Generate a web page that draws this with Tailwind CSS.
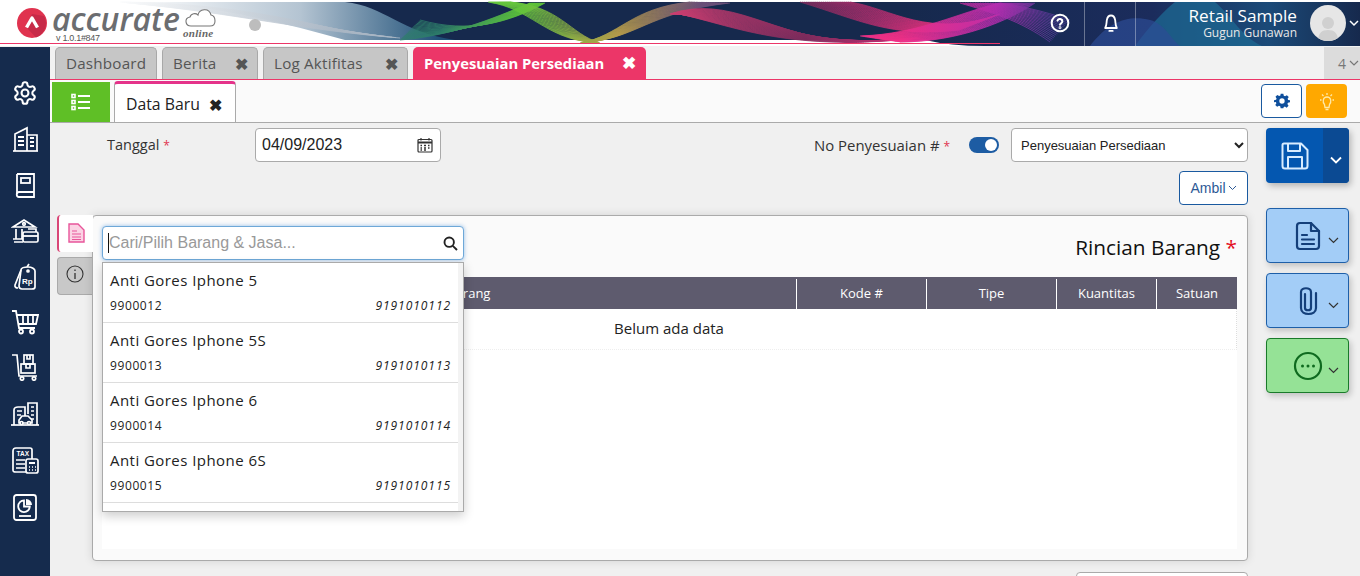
<!DOCTYPE html>
<html lang="id">
<head>
<meta charset="UTF-8">
<title>Accurate Online</title>
<script src="https://cdn.jsdelivr.net/npm/@tailwindcss/browser@4"></script>
</head>
<body class="h-[576px] w-[1360px] overflow-hidden bg-[#f0f0f0] font-['Open_Sans',sans-serif] text-[#222]">

<!-- header -->
<header class="relative flex h-[46px] items-center bg-white">
  <svg id="waves" class="absolute inset-0" width="1360" height="46" viewBox="0 0 1360 46">
    <defs>
      <linearGradient id="leftFade" gradientUnits="userSpaceOnUse" x1="130" y1="0" x2="440" y2="0">
        <stop offset="0" stop-color="#ffffff"/><stop offset="0.55" stop-color="#b4c4d2"/><stop offset="1" stop-color="#1f5078"/>
      </linearGradient>
      <linearGradient id="navy" gradientUnits="userSpaceOnUse" x1="900" y1="0" x2="1360" y2="0">
        <stop offset="0" stop-color="#16294d"/><stop offset="0.55" stop-color="#1b2c5c"/><stop offset="0.8" stop-color="#1b4a78"/><stop offset="1" stop-color="#16294d"/>
      </linearGradient>
      <linearGradient id="gGrey" gradientUnits="userSpaceOnUse" x1="110" y1="0" x2="340" y2="0">
        <stop offset="0" stop-color="#ffffff"/><stop offset="1" stop-color="#a9b6c4"/>
      </linearGradient>
      <linearGradient id="gGreen" gradientUnits="userSpaceOnUse" x1="440" y1="0" x2="590" y2="0">
        <stop offset="0" stop-color="#2d7d6a"/><stop offset="0.6" stop-color="#62cc34"/><stop offset="1" stop-color="#5cb840"/>
      </linearGradient>
      <linearGradient id="gOlive" gradientUnits="userSpaceOnUse" x1="520" y1="0" x2="700" y2="0">
        <stop offset="0" stop-color="#65c63c"/><stop offset="0.55" stop-color="#b49a4a"/><stop offset="1" stop-color="#6a4f78"/>
      </linearGradient>
      <linearGradient id="gPink" gradientUnits="userSpaceOnUse" x1="660" y1="0" x2="950" y2="0">
        <stop offset="0" stop-color="#d23f72"/><stop offset="0.5" stop-color="#7d2b5c"/><stop offset="1" stop-color="#e6307f"/>
      </linearGradient>
      <linearGradient id="gMagenta" gradientUnits="userSpaceOnUse" x1="900" y1="0" x2="1060" y2="0">
        <stop offset="0" stop-color="#ee2f86"/><stop offset="0.6" stop-color="#b52db0"/><stop offset="1" stop-color="#4a3d94"/>
      </linearGradient>
    </defs>
    <path d="M130 2 C210 4 280 22 345 40 H470 V2 Z" fill="url(#leftFade)"/>
    <path d="M345 2 C385 6 400 32 455 40 H925 Q950 46 985 46 H1360 V2 Z" fill="url(#navy)"/>
    <path d="M1135 46 C1150 25 1165 10 1175 2 H1215 C1235 20 1240 35 1262 46 Z" fill="#1e6a93" opacity="0.75"/>
    <path d="M1090 46 C1110 20 1130 15 1150 20 C1165 24 1170 38 1180 46 Z" fill="#2c4c94" opacity="0.7"/>
    <g id="lines" fill="none" stroke-width="0.8"></g>
    <rect x="0" y="43" width="1000" height="1" fill="#ec3668"/>
    <rect x="1084" y="2" width="1" height="44" fill="#ffffff" opacity="0.35"/>
    <rect x="1135" y="2" width="1" height="44" fill="#ffffff" opacity="0.35"/>
  </svg>

  <div class="relative flex h-full items-center pl-[17px]">
    <svg width="30" height="30" viewBox="0 0 30 30">
      <circle cx="15" cy="15" r="15" fill="#e0334f"/>
      <path d="M15 6 L27 8 A15 15 0 0 1 19 29.500 L9 19 Z" fill="#c72a48"/>
      <path d="M9.500 19.500 L15 10 L20.500 19.500" fill="none" stroke="#fff" stroke-width="3.400" stroke-linejoin="round"/>
    </svg>
    <div class="relative ml-[5px] h-full w-[124px]">
      <span class="absolute left-0 top-[-6px] text-[32px] leading-[50px] font-semibold italic text-[#6b6d70]">accurate</span>
      <span class="absolute left-[4px] top-[32px] font-['Liberation_Sans',sans-serif] text-[9px] leading-[12px] tracking-[-0.3px] text-[#555]">v 1.0.1#847</span>
    </div>
    <div class="relative ml-[7px] h-full w-[34px]">
      <svg class="absolute left-0 top-[6px]" width="34" height="22" viewBox="0 0 34 22" fill="#fff" stroke="#777" stroke-width="1.100">
        <path d="M8 20 C2 20 1 12 7 11 C8 7 13 7 15 9 C16 3 26 1 28 9 C33 10 34 20 27 20 Z"/>
      </svg>
      <span class="absolute left-0 top-[27px] font-['Liberation_Serif',serif] text-[11px] leading-[13px] font-bold italic tracking-[0.3px] text-[#666]">online</span>
    </div>
    <span class="ml-[32px] mt-[4px] size-[12px] rounded-full bg-[#bdbdbd]"></span>
  </div>

  <div class="relative ml-auto flex h-full items-center text-white">
    <svg class="mr-[10px]" width="20" height="20" viewBox="0 0 24 24" fill="none" stroke="#fff" stroke-width="2.400" stroke-linecap="round">
      <circle cx="12" cy="12" r="10"/><path d="M9 9.200a3 3 0 0 1 5.800 1c0 2-2.800 2.400-2.800 4"/><circle cx="12" cy="17.600" r="0.500" fill="#fff"/>
    </svg>
    <svg class="ml-[21px] mr-[15px]" width="20" height="20" viewBox="0 0 24 24" fill="none" stroke="#fff" stroke-width="2.200" stroke-linejoin="round">
      <path d="M5 18 C7 15 6.500 11 7 8.500 C7.600 5 9.800 3 12 3 C14.200 3 16.400 5 17 8.500 C17.500 11 17 15 19 18 Z"/><path d="M10 21.500h4" stroke-linecap="round"/>
    </svg>
    <div class="ml-[53px] flex flex-col items-end text-right">
      <span class="text-[17.200px] leading-[20px]">Retail Sample</span>
      <span class="text-[12px] leading-[14px] text-[#e8e8e8]">Gugun Gunawan</span>
    </div>
    <div class="ml-[13px] flex size-[36px] items-end justify-center overflow-hidden rounded-full bg-[#e6e6e6]">
      <svg width="24" height="28" viewBox="0 0 24 28" fill="#d0d0d0"><circle cx="12" cy="10" r="6"/><path d="M2 28 C2 20 6 17 12 17 C18 17 22 20 22 28 Z"/></svg>
    </div>
    <svg class="ml-[3px] mr-[1px]" width="10" height="8" viewBox="0 0 10 8" fill="none" stroke="#fff" stroke-width="1.500"><path d="M1 2 L5 6 L9 2"/></svg>
  </div>
</header>

<div class="flex h-[530px]">
  <!-- sidebar -->
  <aside class="mt-px flex h-[529px] w-[50px] shrink-0 flex-col items-center bg-[#152b4d] pt-[23px] text-white">
    <div class="flex h-[46px] items-center justify-center">
      <svg width="26" height="26" viewBox="0 0 24 24" fill="none" stroke="currentColor" stroke-width="1.900" stroke-linejoin="round"><path d="M12.200 2h-.4a2 2 0 0 0-2 2v.2a2 2 0 0 1-1 1.700l-.4.3a2 2 0 0 1-2 0l-.2-.1a2 2 0 0 0-2.700.7l-.2.4a2 2 0 0 0 .7 2.700l.2.1a2 2 0 0 1 1 1.700v.5a2 2 0 0 1-1 1.800l-.2.1a2 2 0 0 0-.7 2.700l.2.4a2 2 0 0 0 2.700.7l.2-.1a2 2 0 0 1 2 0l.4.3a2 2 0 0 1 1 1.700v.2a2 2 0 0 0 2 2h.4a2 2 0 0 0 2-2v-.2a2 2 0 0 1 1-1.700l.4-.3a2 2 0 0 1 2 0l.2.1a2 2 0 0 0 2.700-.7l.2-.4a2 2 0 0 0-.7-2.700l-.2-.1a2 2 0 0 1-1-1.800v-.5a2 2 0 0 1 1-1.700l.2-.1a2 2 0 0 0 .7-2.700l-.2-.4a2 2 0 0 0-2.700-.7l-.2.1a2 2 0 0 1-2 0l-.4-.3a2 2 0 0 1-1-1.700V4a2 2 0 0 0-2-2z"/><circle cx="12" cy="12" r="3.200"/></svg>
    </div>
    <div class="flex h-[46px] items-center justify-center">
      <svg width="27" height="27" viewBox="0 0 27 27" fill="none" stroke="currentColor" stroke-width="1.700"><path d="M1 25H26"/><path d="M3 25V8L15 2V25"/><path d="M15 9H25V25"/><path d="M6 11H12M6 15H12M6 19H12M18 12H22M18 16H22M18 20H22" stroke-width="1.800"/></svg>
    </div>
    <div class="flex h-[46px] items-center justify-center">
      <svg width="26" height="27" viewBox="0 0 26 27" fill="none" stroke="currentColor" stroke-width="1.800"><path d="M5 2H22V25H7C4 25 4 20 7 20H22"/><path d="M5 2V22"/><rect x="9" y="6" width="9" height="5"/></svg>
    </div>
    <div class="flex h-[46px] items-center justify-center">
      <svg width="28" height="27" viewBox="0 0 28 27" fill="none" stroke="currentColor" stroke-width="1.700"><path d="M2 9L13 2L24 9H2Z"/><circle cx="13" cy="6" r="1.300"/><path d="M5 11V21M11 11V21M3 24H12M2 21H12"/><rect x="12" y="14" width="15" height="10" rx="1.500" fill="#152b4d"/><path d="M12 18H27" stroke-width="1.800"/><path d="M17 11H25V14"/></svg>
    </div>
    <div class="flex h-[45px] items-center justify-center">
      <svg width="24" height="28" viewBox="0 0 24 28" fill="none" stroke="currentColor" stroke-width="1.700" stroke-linejoin="round"><path d="M8 7L2 22C1.500 24 3 25 5 25"/><path d="M8 7C8 5 11 4 15 4C19 4 22 6 22 8V24C22 26 20 26 19 26H9C7 26 6 25 6 23L8 7Z"/><path d="M14 4L16 1"/><circle cx="15" cy="8" r="1"/><text x="9" y="21" font-family="Liberation Sans" font-size="8" font-weight="700" fill="currentColor" stroke="none">Rp</text></svg>
    </div>
    <div class="flex h-[45px] items-center justify-center">
      <svg width="28" height="26" viewBox="0 0 28 26" fill="none" stroke="currentColor" stroke-width="1.800"><path d="M1 2H5L8 19H24"/><path d="M6 6H27L25 15H7.500"/><path d="M12 6V15M17 6V15M22 6V15"/><circle cx="10" cy="22.500" r="2"/><circle cx="21" cy="22.500" r="2"/></svg>
    </div>
    <div class="flex h-[46px] items-center justify-center">
      <svg width="28" height="28" viewBox="0 0 28 28" fill="none" stroke="currentColor" stroke-width="1.700"><path d="M1 2H6L8 23H26"/><rect x="10" y="11" width="14" height="9"/><rect x="13" y="2" width="9" height="9"/><path d="M16 2V6H19V2M15 11V15H19V11"/><circle cx="11" cy="25.500" r="1.700"/><circle cx="23" cy="25.500" r="1.700"/></svg>
    </div>
    <div class="flex h-[47px] items-center justify-center">
      <svg width="28" height="26" viewBox="0 0 28 26" fill="none" stroke="currentColor" stroke-width="1.700"><path d="M0 24H28"/><path d="M3 24V9C3 7 5 6 7 6H14V15"/><path d="M17 13V2H26V24"/><path d="M6 10H11M6 14H10M20 6H23M20 10H23M20 14H23M20 18H23"/><path d="M8 22V19L11 15H17L21 19V22Z" fill="#152b4d"/><circle cx="10.500" cy="22" r="1.500" fill="#152b4d"/><circle cx="18" cy="22" r="1.500" fill="#152b4d"/></svg>
    </div>
    <div class="flex h-[46px] items-center justify-center">
      <svg width="27" height="27" viewBox="0 0 27 27" fill="none" stroke="currentColor" stroke-width="1.700"><path d="M20 12V3C20 2 19 1 18 1H4C2 1 1 2 1 4V23C1 25 2 25 4 25H14"/><text x="4.500" y="9" font-family="Liberation Sans" font-size="6.500" font-weight="700" fill="currentColor" stroke="none">TAX</text><path d="M4 13H13M4 17H13M4 21H13"/><rect x="14" y="12" width="12" height="14" rx="2" fill="#152b4d"/><path d="M17 16H23" stroke-width="2"/><path d="M17 20H18M20 20H21M23 20H24M17 23H18M20 23H21M23 23H24" stroke-width="1.700"/></svg>
    </div>
    <div class="flex h-[47px] items-center justify-center pt-[1px]">
      <svg width="24" height="27" viewBox="0 0 24 27" fill="none" stroke="currentColor" stroke-width="1.800"><rect x="1" y="1" width="22" height="25" rx="2.500"/><path d="M11 6.500A5.800 5.800 0 1 0 16.800 12.500H11Z"/><path d="M13 5A6 6 0 0 1 19 11H13Z" fill="currentColor" stroke="none"/><path d="M6 22H18"/></svg>
    </div>
  </aside>

  <main class="min-w-0 flex-1">
    <!-- open tabs -->
    <div class="flex h-[34px] items-end border-b border-[#ec3668] bg-[#f2f2f2] pl-[5px]">
      <div class="mr-[5px] flex h-[32px] w-[102px] items-center rounded-t-[5px] border border-b-0 border-[#a8a8a8] bg-[#c6c6c6] pl-[10px] text-[15.200px] tracking-[0.2px] text-[#555]">Dashboard</div>
      <div class="mr-[5px] flex h-[32px] w-[96px] items-center rounded-t-[5px] border border-b-0 border-[#a8a8a8] bg-[#c6c6c6] pl-[10px] text-[15.200px] tracking-[0.2px] text-[#555]">Berita<span class="ml-auto mr-[9px] text-[16px] font-bold">✖</span></div>
      <div class="mr-[5px] flex h-[32px] w-[145px] items-center rounded-t-[5px] border border-b-0 border-[#a8a8a8] bg-[#c6c6c6] pl-[10px] text-[15.200px] tracking-[0.2px] text-[#555]">Log Aktifitas<span class="ml-auto mr-[9px] text-[16px] font-bold">✖</span></div>
      <div class="flex h-[32px] w-[233px] items-center rounded-t-[5px] bg-[#ec3668] pl-[11px] text-[14.800px] font-bold text-white">Penyesuaian Persediaan<span class="ml-auto mr-[10px] text-[17px]">✖</span></div>
      <div class="ml-auto flex h-[32px] w-[36px] items-center justify-end gap-[3px] bg-[#dcdcdc] pr-[1px] text-[14px] text-[#777]">4<svg width="10" height="7" viewBox="0 0 10 7" fill="none" stroke="#777" stroke-width="1.200"><path d="M1 1L5 5L9 1"/></svg></div>
    </div>

    <!-- form tabs -->
    <div class="flex h-[43px] items-end border-b border-[#aaa] bg-[#fafafa] pl-[2px]">
      <div class="flex h-[40px] w-[58px] items-center justify-center bg-[#5fbf26]">
        <svg width="20" height="18" viewBox="0 0 20 18" fill="none" stroke="#fff" stroke-width="1.600"><rect x="1" y="1.500" width="3" height="3"/><rect x="1" y="7.500" width="3" height="3"/><rect x="1" y="13.500" width="3" height="3"/><path d="M7 3H19M7 9H19M7 15H19" stroke-width="2"/></svg>
      </div>
      <div class="ml-[4px] flex h-[41px] w-[122px] items-center rounded-t-[4px] border-x border-t-[3px] border-x-[#aaa] border-t-[#e5338a] bg-white pl-[11px] pt-[3px] text-[15.800px]">Data Baru<span class="ml-[9px] text-[16px] leading-none font-bold">✖</span></div>
      <div class="ml-auto mb-[4px] mr-[13px] flex gap-[4px]">
        <div class="flex h-[34px] w-[41px] items-center justify-center rounded-[4px] border border-[#1a5aa0] bg-white">
          <svg width="16" height="16" viewBox="0 0 24 24" fill="#0f4f9c"><path fill-rule="evenodd" d="M10 1h4l.7 3.100 1.900.8 2.700-1.700 2.800 2.800-1.700 2.700.8 1.900L24 11v3l-3.100.7-.8 1.900 1.700 2.700-2.800 2.800-2.700-1.700-1.900.8L14 23h-4l-.7-3.100-1.900-.8-2.700 1.700-2.800-2.800 1.700-2.700-.8-1.900L0 14v-3l3.100-.7.800-1.900L2.200 5.700 5 2.900l2.700 1.700 1.900-.8zM12 8a4 4 0 1 0 0 8 4 4 0 0 0 0-8z"/></svg>
        </div>
        <div class="flex h-[34px] w-[41px] items-center justify-center rounded-[4px] bg-[#ffa800]">
          <svg width="14" height="19" viewBox="0 0 14 19" fill="none" stroke="#ffe9a8" stroke-width="1.300"><path d="M4.500 12.500C2.500 10.500 2.500 5 7 5C11.500 5 11.500 10.500 9.500 12.500L9 15.500H5Z"/><path d="M5.500 17.500H8.500M7 1V3M2 2.500L3.500 4M12 2.500L10.500 4M0 8H1.500M12.500 8H14"/></svg>
        </div>
      </div>
    </div>

    <div class="flex">
      <!-- form -->
      <div class="w-[1198px] shrink-0">
        <div class="mt-[5px] flex h-[34px] items-center">
          <label class="ml-[57px] w-[148px] text-[14.500px] text-[#333]">Tanggal <span class="text-[12px] text-[#e0334f]">*</span></label>
          <div class="flex h-[34px] w-[186px] items-center rounded-[4px] border border-[#aaa] bg-white pl-[6px] pr-[7px] font-['Liberation_Sans',sans-serif] text-[16px] text-[#222]">
            04/09/2023
            <svg class="ml-auto" width="16" height="16" viewBox="0 0 16 16" fill="none" stroke="#333" stroke-width="1.200"><rect x="1" y="2.500" width="14" height="12.500" rx="1"/><path d="M1 5.500H15" stroke-width="2"/><path d="M4 1V3.500M12 1V3.500"/><path d="M3.500 8.500H5M7 8.500H9M11 8.500H12.500M3.500 11H5M7 11H9M11 11H12.500M3.500 13H5M7 13H9" stroke-width="1.400"/></svg>
          </div>
          <span class="ml-auto text-[14.900px] text-[#333]">No Penyesuaian # <span class="text-[12px] text-[#e0334f]">*</span></span>
          <div class="ml-[19px] flex h-[16px] w-[30px] items-center justify-end rounded-full bg-[#1d5ca3] pr-[2px]"><span class="size-[12px] rounded-full bg-white"></span></div>
          <select class="ml-[12px] h-[34px] w-[237px] rounded-[4px] border border-[#aaa] bg-white pl-[5px] font-['Liberation_Sans',sans-serif] text-[13px] text-[#222]">
            <option>Penyesuaian Persediaan</option>
          </select>
        </div>
        <div class="mt-[9px] flex justify-end">
          <div class="flex h-[34px] w-[69px] items-center justify-center gap-[2px] rounded-[4px] border border-[#1a5aa0] bg-white font-['Liberation_Sans',sans-serif] text-[14px] text-[#2d5a96]">Ambil<svg width="9" height="6" viewBox="0 0 9 6" fill="none" stroke="#2d5a96"><path d="M1 1L4.500 4.500L8 1"/></svg></div>
        </div>

        <div class="relative mt-[10px] flex">
          <!-- side tabs -->
          <div class="ml-[7px] w-[35px] shrink-0">
            <div class="relative z-10 flex h-[37px] w-[36px] items-start justify-center rounded-l-[4px] border-l-2 border-[#d94677] bg-white pt-[8px]">
              <svg width="18" height="20" viewBox="0 0 18 20" fill="#fbd3e4" stroke="#e8559a" stroke-width="1.400"><path d="M2 1H11L17 7V19H2Z"/><path d="M5 8H10M5 11H14M5 14H14M5 16.500H14" stroke-width="1.200"/></svg>
            </div>
            <div class="mt-[5px] flex h-[38px] items-start justify-center rounded-l-[4px] border border-r-0 border-[#aaa] bg-[#c8c8c8] pt-[7px]">
              <svg width="18" height="18" viewBox="0 0 18 18" fill="none" stroke="#333" stroke-width="1.100"><circle cx="9" cy="9" r="8"/><path d="M9 8V14M9 4.500V6" stroke-width="1.300"/></svg>
            </div>
          </div>
          <!-- panel -->
          <section class="relative h-[346px] w-[1156px] rounded-[4px] border border-[#aaa] bg-[#fafafa] py-[9px] pl-[9px] pr-[10px] shadow-[0_0_10px_rgba(0,0,0,0.12)]">
            <div class="h-[324px] bg-white">
              <h2 class="flex h-[52px] items-end justify-end bg-[#fafafa] pb-[14px] text-[20.800px] leading-[32px] text-[#111]">Rincian Barang&nbsp;<span class="text-[#e3101f]">*</span></h2>
              <div class="grid h-[32px] grid-cols-[695px_130px_130px_100px_1fr] items-center bg-[#5e5b6e] pt-[2px] text-center text-[13px] text-white">
                <div class="flex h-full items-center justify-center border-r border-white">Nama Barang</div>
                <div class="flex h-full items-center justify-center border-r border-white">Kode #</div>
                <div class="flex h-full items-center justify-center border-r border-white">Tipe</div>
                <div class="flex h-full items-center justify-center border-r border-white">Kuantitas</div>
                <div>Satuan</div>
              </div>
              <div class="flex h-[41px] items-center justify-center border-b border-r border-dotted border-b-[#eee] border-r-[#ddd] bg-white pb-[2px] text-[15px]">Belum ada data</div>
            </div>

            <!-- search over the table -->
            <div class="absolute left-[9px] top-[10px] h-[34px] w-[362px]">
              <input class="h-[34px] w-full rounded-[4px] border border-[#6ea8d8] bg-white pl-[6px] pr-[30px] font-['Liberation_Sans',sans-serif] text-[16px] shadow-[0_0_4px_rgba(80,150,220,0.6)] outline-none placeholder:text-[#999]" placeholder="Cari/Pilih Barang &amp; Jasa...">
              <span class="absolute left-[6px] top-[7px] h-[20px] w-px bg-[#111]"></span>
              <svg class="absolute right-[6px] top-[10px]" width="15" height="15" viewBox="0 0 15 15" fill="none" stroke="#222" stroke-width="1.900"><circle cx="6.200" cy="6.200" r="4.700"/><path d="M9.800 9.800L14 14"/></svg>
            </div>
            <div class="absolute left-[9px] top-[46px] h-[250px] w-[362px] overflow-hidden border border-[#aaa] bg-white shadow-[0_4px_10px_rgba(0,0,0,0.2)]">
              <div class="absolute inset-y-0 right-0 w-[5px] bg-[#f3f3f3]"></div>
              <ul class="mr-[5px]">
                <li class="h-[60px] border-b border-[#ddd] px-[7px] pt-[5px]">
                  <p class="text-[15px] leading-[24px] tracking-[0.45px]">Anti Gores Iphone 5</p>
                  <p class="flex justify-between text-[12px] leading-[27px] tracking-[0.6px]"><span>9900012</span><i class="tracking-[0.95px]">9191010112</i></p>
                </li>
                <li class="h-[60px] border-b border-[#ddd] px-[7px] pt-[5px]">
                  <p class="text-[15px] leading-[24px] tracking-[0.45px]">Anti Gores Iphone 5S</p>
                  <p class="flex justify-between text-[12px] leading-[27px] tracking-[0.6px]"><span>9900013</span><i class="tracking-[0.95px]">9191010113</i></p>
                </li>
                <li class="h-[60px] border-b border-[#ddd] px-[7px] pt-[5px]">
                  <p class="text-[15px] leading-[24px] tracking-[0.45px]">Anti Gores Iphone 6</p>
                  <p class="flex justify-between text-[12px] leading-[27px] tracking-[0.6px]"><span>9900014</span><i class="tracking-[0.95px]">9191010114</i></p>
                </li>
                <li class="h-[60px] border-b border-[#ddd] px-[7px] pt-[5px]">
                  <p class="text-[15px] leading-[24px] tracking-[0.45px]">Anti Gores Iphone 6S</p>
                  <p class="flex justify-between text-[12px] leading-[27px] tracking-[0.6px]"><span>9900015</span><i class="tracking-[0.95px]">9191010115</i></p>
                </li>
              </ul>
            </div>
          </section>
        </div>
        <div class="ml-auto mt-[11px] h-[20px] w-[172px] rounded-t-[4px] border border-[#aaa] bg-white"></div>
      </div>

      <!-- action buttons -->
      <div class="ml-[18px] flex w-[83px] shrink-0 flex-col pt-[5px]">
        <div class="flex h-[55px] overflow-hidden rounded-[4px] bg-[#0457b0] shadow-[2px_3px_6px_rgba(0,0,0,0.25)]">
          <div class="flex w-[57px] items-center justify-center">
            <svg width="28" height="28" viewBox="0 0 28 28" fill="none" stroke="#d8ecff" stroke-width="2" stroke-linejoin="round"><path d="M3 1.500H20L26.500 8V24C26.500 25.500 25.500 26.500 24 26.500H4C2.500 26.500 1.500 25.500 1.500 24V3C1.500 2 2 1.500 3 1.500Z"/><path d="M7 1.500V9H19V1.500M7 26.500V15H21V26.500"/></svg>
          </div>
          <div class="flex flex-1 items-center justify-center bg-[#0b4a93] pt-[8px]">
            <svg width="12" height="8" viewBox="0 0 12 8" fill="none" stroke="#fff" stroke-width="1.800"><path d="M1 1.500L6 6.500L11 1.500"/></svg>
          </div>
        </div>
        <div class="mt-[25px] flex h-[55px] items-center justify-end rounded-[4px] border border-[#1e5fa8] bg-[#a3cdf7] pr-[9px] shadow-[2px_3px_6px_rgba(0,0,0,0.2)]">
          <svg class="mr-[7px]" width="26" height="30" viewBox="0 0 26 30" fill="none" stroke="#143f7a" stroke-width="2.200" stroke-linejoin="round"><path d="M5 2H16L24 10V25C24 27 22.500 28 21 28H5C3 28 2 27 2 25V5C2 3 3 2 5 2Z"/><path d="M16 2V10H24M7 14H12M7 18.500H19M7 23H19" stroke-linecap="round"/></svg>
          <svg class="mt-[10px]" width="11" height="7" viewBox="0 0 11 7" fill="none" stroke="#333" stroke-width="1.200"><path d="M1 1L5.500 5.500L10 1"/></svg>
        </div>
        <div class="mt-[10px] flex h-[55px] items-center justify-end rounded-[4px] border border-[#1e5fa8] bg-[#a3cdf7] pr-[9px] shadow-[2px_3px_6px_rgba(0,0,0,0.2)]">
          <svg class="mr-[9px]" width="22" height="30" viewBox="0 0 22 30" fill="none" stroke="#143f7a" stroke-width="2.200" stroke-linecap="round"><path d="M8 8V22C8 25 14 25 14 22V6C14 1 4 1 4 6V22C4 30 19 30 19 22V7"/></svg>
          <svg class="mt-[10px]" width="11" height="7" viewBox="0 0 11 7" fill="none" stroke="#333" stroke-width="1.200"><path d="M1 1L5.500 5.500L10 1"/></svg>
        </div>
        <div class="mt-[10px] flex h-[55px] items-center justify-end rounded-[4px] border border-[#1a7a2a] bg-[#95e296] pr-[9px] shadow-[2px_3px_6px_rgba(0,0,0,0.2)]">
          <svg class="mr-[5px]" width="30" height="30" viewBox="0 0 30 30" fill="none" stroke="#0f6a1f" stroke-width="2.200"><circle cx="15" cy="15" r="13"/><circle cx="9.500" cy="15" r="1.500" fill="#0f6a1f" stroke="none"/><circle cx="15" cy="15" r="1.500" fill="#0f6a1f" stroke="none"/><circle cx="20.500" cy="15" r="1.500" fill="#0f6a1f" stroke="none"/></svg>
          <svg class="mt-[10px]" width="11" height="7" viewBox="0 0 11 7" fill="none" stroke="#333" stroke-width="1.200"><path d="M1 1L5.500 5.500L10 1"/></svg>
        </div>
      </div>
    </div>
  </main>
</div>

<script>
  // draws the ribbon bands of the banner as fans of thin lines
  const group = document.getElementById('lines');
  function band(a, b, count, stroke) {
    for (let i = 0; i <= count; i++) {
      const t = i / count;
      const p = a.map((v, k) => (v + (b[k] - v) * t).toFixed(1));
      const line = document.createElementNS('http://www.w3.org/2000/svg', 'path');
      line.setAttribute('d', `M${p[0]} ${p[1]}C${p[2]} ${p[3]} ${p[4]} ${p[5]} ${p[6]} ${p[7]}`);
      line.setAttribute('stroke', stroke);
      group.appendChild(line);
    }
  }
  band([120,2, 210,3, 280,15, 345,32], [130,3, 240,14, 300,30, 400,38], 14, 'url(#gGrey)');
  band([400,40, 450,36, 490,20, 530,3], [420,20, 470,34, 510,22, 545,3], 18, 'url(#gGreen)');
  band([488,2, 530,8, 545,38, 590,42], [510,2, 560,6, 570,34, 600,43], 20, 'url(#gOlive)');
  band([580,43, 620,36, 630,8, 690,2], [590,42, 640,36, 650,12, 730,3], 24, 'url(#gOlive)');
  band([670,14, 730,-6, 770,35, 850,43], [680,14, 740,28, 790,52, 920,38], 30, 'url(#gPink)');
  band([800,2, 860,20, 890,38, 960,30], [850,2, 890,8, 930,40, 1000,14], 26, 'url(#gPink)');
  band([860,36, 920,34, 960,12, 1000,3], [900,42, 960,42, 1010,20, 1035,3], 32, 'url(#gMagenta)');
  band([960,3, 990,12, 1020,20, 1050,42], [1000,3, 1020,6, 1040,10, 1070,20], 16, 'url(#gMagenta)');
</script>
</body>
</html>
